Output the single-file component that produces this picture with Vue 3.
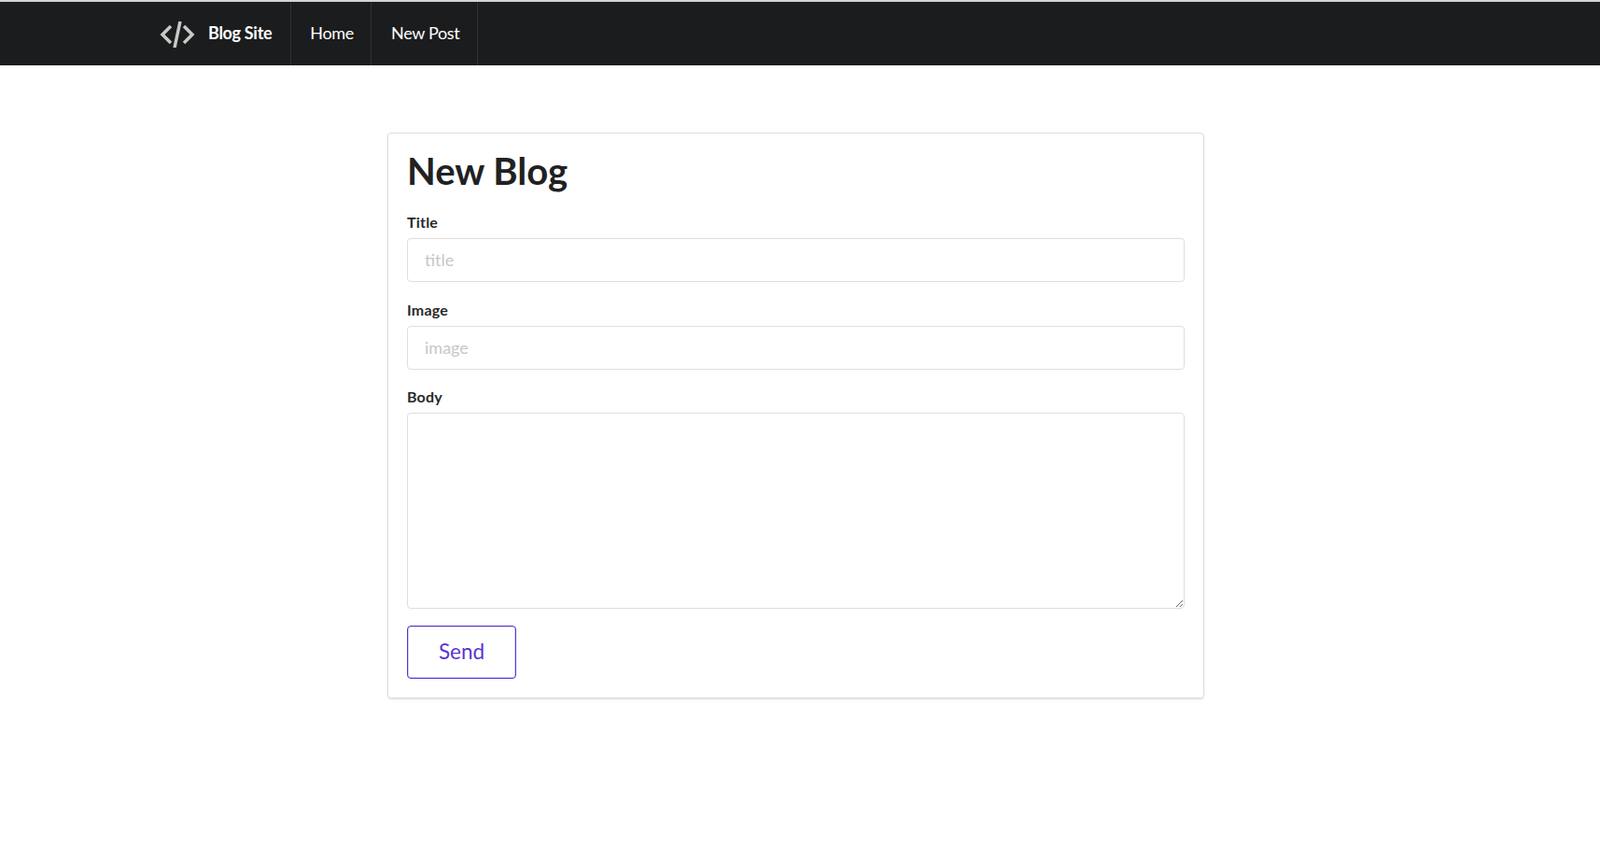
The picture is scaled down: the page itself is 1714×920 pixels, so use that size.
<template>
  <div class="page">
    <nav class="navbar">
      <div class="nav-inner">
        <a class="nav-item brand">
          <svg class="logo" width="38" height="30" viewBox="0 0 38 30" fill="none" stroke="#c8c8c8" stroke-width="3.5">
            <path d="M12 6 L3 15 L12 24" />
            <path d="M26 6 L35 15 L26 24" />
            <path d="M22 1 L16 29" />
          </svg>
          <span>Blog Site</span>
        </a>
        <a class="nav-item home">Home</a>
        <a class="nav-item post">New Post</a>
      </div>
    </nav>
    <main class="main">
      <form class="card" @submit.prevent>
        <h1>New Blog</h1>
        <div class="field first">
          <label>Title</label>
          <input type="text" placeholder="title" />
        </div>
        <div class="field">
          <label>Image</label>
          <input type="text" placeholder="image" />
        </div>
        <div class="field">
          <label>Body</label>
          <textarea></textarea>
        </div>
        <button class="send" type="submit">Send</button>
      </form>
    </main>
  </div>
</template>

<script setup>
</script>

<style>
html, body { margin: 0; background: #fff; }
</style>

<style scoped>
.page {
  font-family: Lato, "Open Sans", sans-serif;
  color: #1b1c1d;
  min-height: 920px;
  background: #fff;
}
.navbar {
  background: #1b1c1d;
  height: 68px;
  border-top: 2px solid #d4d4d5;
}
.nav-inner {
  display: flex;
  height: 100%;
  padding-left: 150px;
}
.nav-item {
  display: flex;
  align-items: center;
  padding: 0 20px 2px;
  color: #fff;
  font-size: 18px;
  border-right: 1px solid #303132;
  letter-spacing: -0.3px;
}
.home { padding-right: 18px; }
.post { padding-left: 21px; padding-right: 19px; letter-spacing: -0.35px; }
.brand {
  padding-left: 21px;
  padding-right: 20px;
  font-weight: 700;
  gap: 14px;
}
.logo { display: block; margin-top: 3px; }
.main {
  display: flex;
  justify-content: center;
  padding-top: 72px;
  padding-right: 9px;
}
.card {
  width: 875px;
  box-sizing: border-box;
  padding: 16px 20px 20px;
  border: 1px solid #dedede;
  border-radius: 4px;
  box-shadow: 0 1px 2px rgba(34, 36, 38, 0.15);
  display: flex;
  flex-direction: column;
  align-items: flex-start;
}
h1 {
  margin: 0 0 20px;
  font-size: 40px;
  font-weight: 700;
  line-height: 48px;
  color: #202122;
}
.field {
  width: 100%;
  margin-bottom: 18px;
}
.field.first { margin-bottom: 19px; }
label {
  display: block;
  font-size: 16px;
  font-weight: 700;
  line-height: 22px;
  margin-bottom: 6px;
  letter-spacing: 0.2px;
  color: #28292a;
}
input, textarea {
  display: block;
  width: 100%;
  box-sizing: border-box;
  font-family: inherit;
  font-size: 18px;
  border: 1px solid #dedede;
  border-radius: 4px;
  padding: 9px 18px 11px;
  outline: none;
  color: #1b1c1d;
}
input { height: 47px; }
input::placeholder { color: #c7c7c7; opacity: 1; }
textarea { height: 210px; resize: vertical; }
.send {
  width: 117px;
  height: 57px;
  padding: 0 0 2px;
  background: #fff;
  border: 1px solid #5a35d0;
  border-radius: 4px;
  box-shadow: inset 0 0 0 1px rgba(90, 53, 208, 0.25);
  color: #5a35d0;
  font-family: inherit;
  font-size: 22.5px;
}
</style>
